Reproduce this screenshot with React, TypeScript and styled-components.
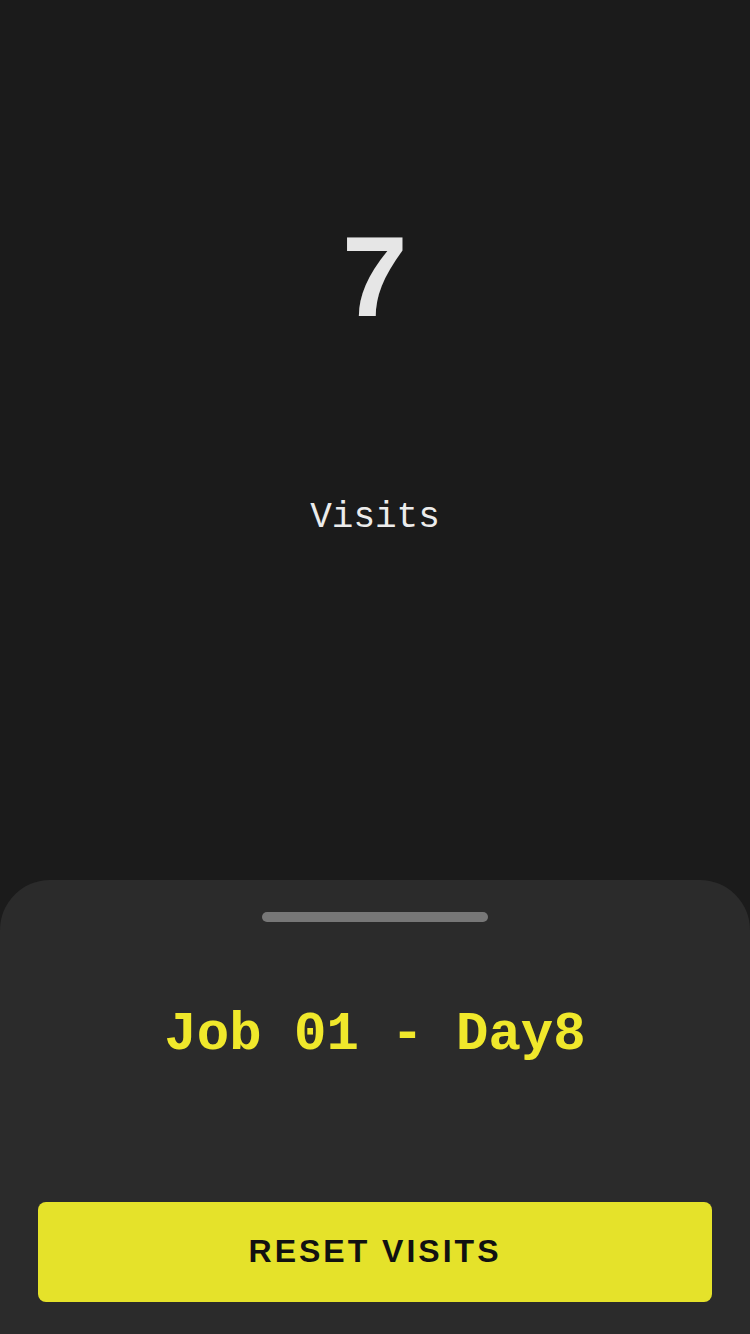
import styled, { createGlobalStyle } from "styled-components";

const GlobalStyle = createGlobalStyle`
  html, body {
    margin: 0;
    padding: 0;
    background: #1b1b1b;
  }
  * {
    box-sizing: border-box;
  }
`;

export default function App() {
  return (
    <>
      <GlobalStyle />
      <Screen>
        <Counter>
          <Count>7</Count>
          <CountLabel>Visits</CountLabel>
        </Counter>
        <Sheet>
          <Handle />
          <JobTitle>Job 01 - Day8</JobTitle>
          <ResetButton>RESET VISITS</ResetButton>
        </Sheet>
      </Screen>
    </>
  );
}

const Screen = styled.div`
  width: 750px;
  height: 1334px;
  display: flex;
  flex-direction: column;
  background: #1b1b1b;
  overflow: hidden;
`;

const Counter = styled.div`
  height: 880px;
  display: flex;
  flex-direction: column;
  align-items: center;
  padding-top: 226px;
`;

const Count = styled.div`
  font-family: "Courier New", "Liberation Mono", monospace;
  font-weight: 700;
  font-size: 118px;
  line-height: 118px;
  color: #e6e6e6;
`;

const CountLabel = styled.div`
  margin-top: 154px;
  font-family: "Courier New", "Liberation Mono", monospace;
  font-size: 36px;
  line-height: 40px;
  color: #ececec;
`;

const Sheet = styled.div`
  flex: 1;
  display: flex;
  flex-direction: column;
  align-items: center;
  background: #2b2b2b;
  border-radius: 50px 50px 0 0;
  padding: 32px 38px 32px;
`;

const Handle = styled.div`
  width: 226px;
  height: 10px;
  border-radius: 5px;
  background: #777777;
`;

const JobTitle = styled.div`
  margin-top: 84px;
  font-family: "Courier New", "Liberation Mono", monospace;
  font-weight: 700;
  font-size: 54px;
  line-height: 58px;
  color: #f0e82b;
`;

const ResetButton = styled.button`
  margin-top: auto;
  width: 100%;
  height: 100px;
  border: none;
  border-radius: 8px;
  background: #e5e22a;
  color: #111111;
  font-family: "Liberation Sans", Arial, sans-serif;
  font-weight: 700;
  font-size: 32px;
  letter-spacing: 3px;
  padding-bottom: 2px;
  cursor: pointer;
`;
